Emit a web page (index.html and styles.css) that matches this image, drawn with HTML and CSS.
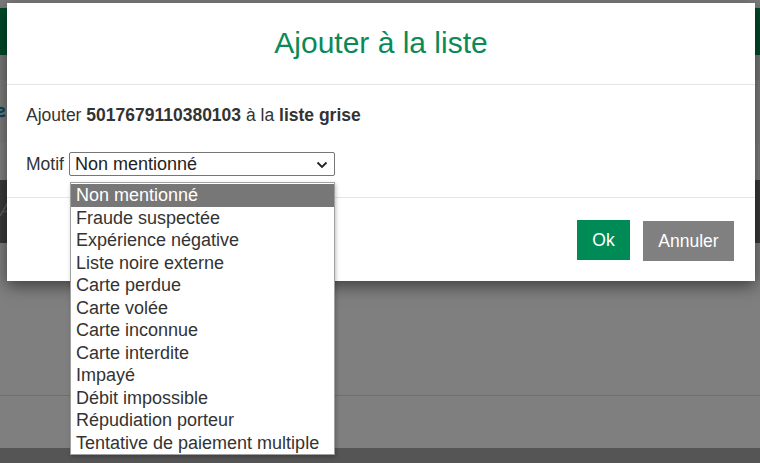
FILE: index.html
```html
<!DOCTYPE html>
<html lang="fr">
<head>
<meta charset="utf-8">
<title>Ajouter à la liste</title>
<link rel="stylesheet" href="styles.css">
</head>
<body>
<div class="page">
  <div class="bg-top"></div>
  <div class="bg-header"></div>
  <div class="bg-band1"></div>
  <div class="bg-band2"><svg class="bg-glyph" width="8" height="12" viewBox="0 0 8 12"><path d="M0 3 C3 1 6 2 6 4 C6 6 0 6 0 8 C0 10 4 11 7 9" fill="none" stroke="#0a4a5a" stroke-width="2.2"/></svg></div>
  <div class="bg-band3"></div>
  <div class="bg-dark"><span class="bg-a">A</span></div>
  <div class="bg-mid"></div>
  <div class="bg-low"></div>
  <div class="bg-foot"></div>
</div>

<div class="modal">
  <div class="modal-header">
    <h2 class="modal-title">Ajouter à la liste</h2>
  </div>
  <div class="modal-body">
    <p class="intro">Ajouter <b>5017679110380103</b> à la <b>liste grise</b></p>
    <div class="field">
      <label class="field-label">Motif</label>
      <div class="select">
        <span>Non mentionné</span>
        <svg class="chev" width="12" height="8" viewBox="0 0 12 8"><path d="M1.5 1.5 L6 6 L10.5 1.5" fill="none" stroke="#222" stroke-width="1.8"/></svg>
      </div>
    </div>
  </div>
  <div class="modal-footer">
    <button class="btn btn-ok">Ok</button>
    <button class="btn btn-cancel">Annuler</button>
  </div>
</div>

<ul class="dropdown">
  <li class="active">Non mentionné</li>
  <li>Fraude suspectée</li>
  <li>Expérience négative</li>
  <li>Liste noire externe</li>
  <li>Carte perdue</li>
  <li>Carte volée</li>
  <li>Carte inconnue</li>
  <li>Carte interdite</li>
  <li>Impayé</li>
  <li>Débit impossible</li>
  <li>Répudiation porteur</li>
  <li>Tentative de paiement multiple</li>
</ul>
</body>
</html>
```

FILE: styles.css
```css
* { box-sizing: border-box; }
html, body { margin: 0; padding: 0; }
body {
  width: 760px;
  height: 463px;
  overflow: hidden;
  background: #7f7f7f;
  font-family: "Liberation Sans", Arial, sans-serif;
  color: #333;
  position: relative;
}
.page { display: flex; flex-direction: column; height: 463px; }
.bg-top { height: 8px; background: #7b7b7b; }
.bg-header { height: 47px; background: #004a2b; }
.bg-band1 { height: 25px; background: #787878; }
.bg-band2 { height: 63px; background: #7d7d7d; position: relative; }
.bg-glyph { position: absolute; left: -2px; top: 26px; }
.bg-band3 { height: 37px; background: #808080; }
.bg-dark { height: 63px; background: #3a3a3a; position: relative; }
.bg-a { position: absolute; left: 0; top: 20px; font-size: 18px; color: #5a5a5a; font-style: italic; }
.bg-mid { height: 153px; background: #7f7f7f; border-bottom: 1px solid #6e6e6e; }
.bg-low { flex: 1; background: #7f7f7f; }
.bg-foot { height: 15px; background: #555; }

.modal {
  position: absolute;
  left: 7px;
  top: 3px;
  width: 748px;
  height: 278px;
  background: #fff;
  box-shadow: 0 5px 15px rgba(0,0,0,0.5);
  display: flex;
  flex-direction: column;
}
.modal-header {
  height: 82px;
  border-bottom: 1px solid #e5e5e5;
  display: flex;
  align-items: center;
  justify-content: center;
}
.modal-title {
  margin: 0;
  font-weight: normal;
  font-size: 30px;
  color: #0b8a57;
  padding-bottom: 1px;
}
.modal-body {
  height: 113px;
  border-bottom: 1px solid #e5e5e5;
  padding: 19px 19px 0;
}
.intro { margin: 0; font-size: 17.5px; line-height: 22px; }
.intro b { font-weight: bold; }
.field {
  margin-top: 26px;
  display: flex;
  align-items: center;
  gap: 5px;
}
.field-label { font-size: 17.5px; color: #333; }
.select {
  width: 266px;
  height: 24px;
  border: 1px solid #767676;
  border-radius: 2px;
  display: flex;
  align-items: center;
  justify-content: space-between;
  padding: 0 6px 0 5px;
  font-size: 18px;
  color: #222;
}
.chev { margin-top: 1px; }
.modal-footer {
  flex: 1;
  display: flex;
  justify-content: flex-end;
  align-items: flex-start;
  padding: 22px 21px 0 0;
  gap: 13px;
}
.btn {
  border: none;
  font-family: "Liberation Sans", Arial, sans-serif;
  font-size: 17.5px;
  color: #fff;
  height: 40px;
  padding: 0;
}
.btn-ok { width: 53px; background: #008a55; }
.btn-cancel { width: 91px; background: #808080; margin-top: 1px; }

.dropdown {
  position: absolute;
  left: 70px;
  top: 182px;
  width: 265px;
  height: 273px;
  margin: 0;
  padding: 1px 0;
  list-style: none;
  background: #fff;
  border: 1px solid #a0a0a0;
  box-shadow: 1px 2px 4px rgba(0,0,0,0.25);
}
.dropdown li {
  height: 22.5px;
  line-height: 22.5px;
  padding-left: 5px;
  font-size: 18px;
  color: #333;
  white-space: nowrap;
}
.dropdown li.active { background: #777; color: #fff; }
```
